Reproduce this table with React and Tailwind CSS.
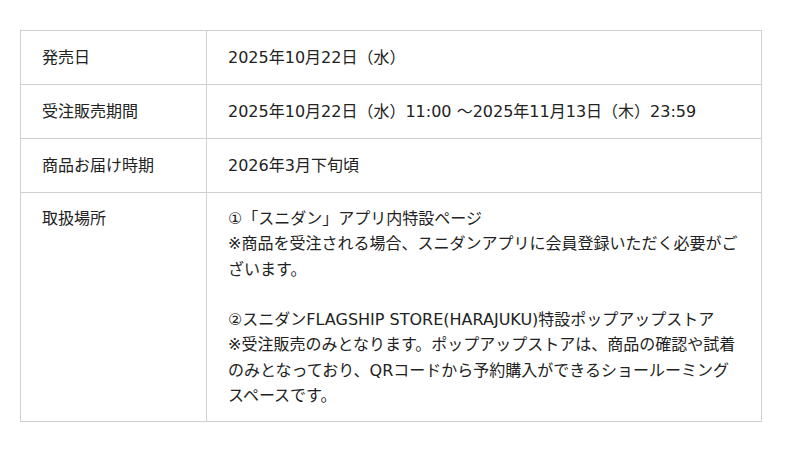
const rows = [
  { label: '発売日', value: ['2025年10月22日（水）'] },
  { label: '受注販売期間', value: ['2025年10月22日（水）11:00 ～2025年11月13日（木）23:59'] },
  { label: '商品お届け時期', value: ['2026年3月下旬頃'] },
  {
    label: '取扱場所',
    value: [
      '①「スニダン」アプリ内特設ページ',
      '※商品を受注される場合、スニダンアプリに会員登録いただく必要がございます。',
      '',
      '②スニダンFLAGSHIP STORE(HARAJUKU)特設ポップアップストア',
      '※受注販売のみとなります。ポップアップストアは、商品の確認や試着のみとなっており、QRコードから予約購入ができるショールーミングスペースです。',
    ],
  },
]

export default function App() {
  return (
    <div
      className="w-[800px] h-[452px] bg-white px-5 pt-[30px] text-[#222] text-[16px] leading-[25.25px]"
      style={{ fontFamily: '"DejaVu Sans", "Noto Sans CJK JP", sans-serif' }}
    >
      <table className="w-[742px] border-collapse">
        <tbody>
          {rows.map((r, idx) => (
            <tr key={r.label} className={idx < 3 ? 'h-[54px] align-middle' : 'align-top'}>
              <th className="w-[186px] border border-[#d0d0d0] px-[21px] py-[13px] text-left font-normal">
                {r.label}
              </th>
              <td className="border border-[#d0d0d0] pl-[21px] pr-[20px] py-[13px]">
                {r.value.map((line, i) =>
                  line ? <p key={i}>{line}</p> : <p key={i}>&nbsp;</p>
                )}
              </td>
            </tr>
          ))}
        </tbody>
      </table>
    </div>
  )
}
